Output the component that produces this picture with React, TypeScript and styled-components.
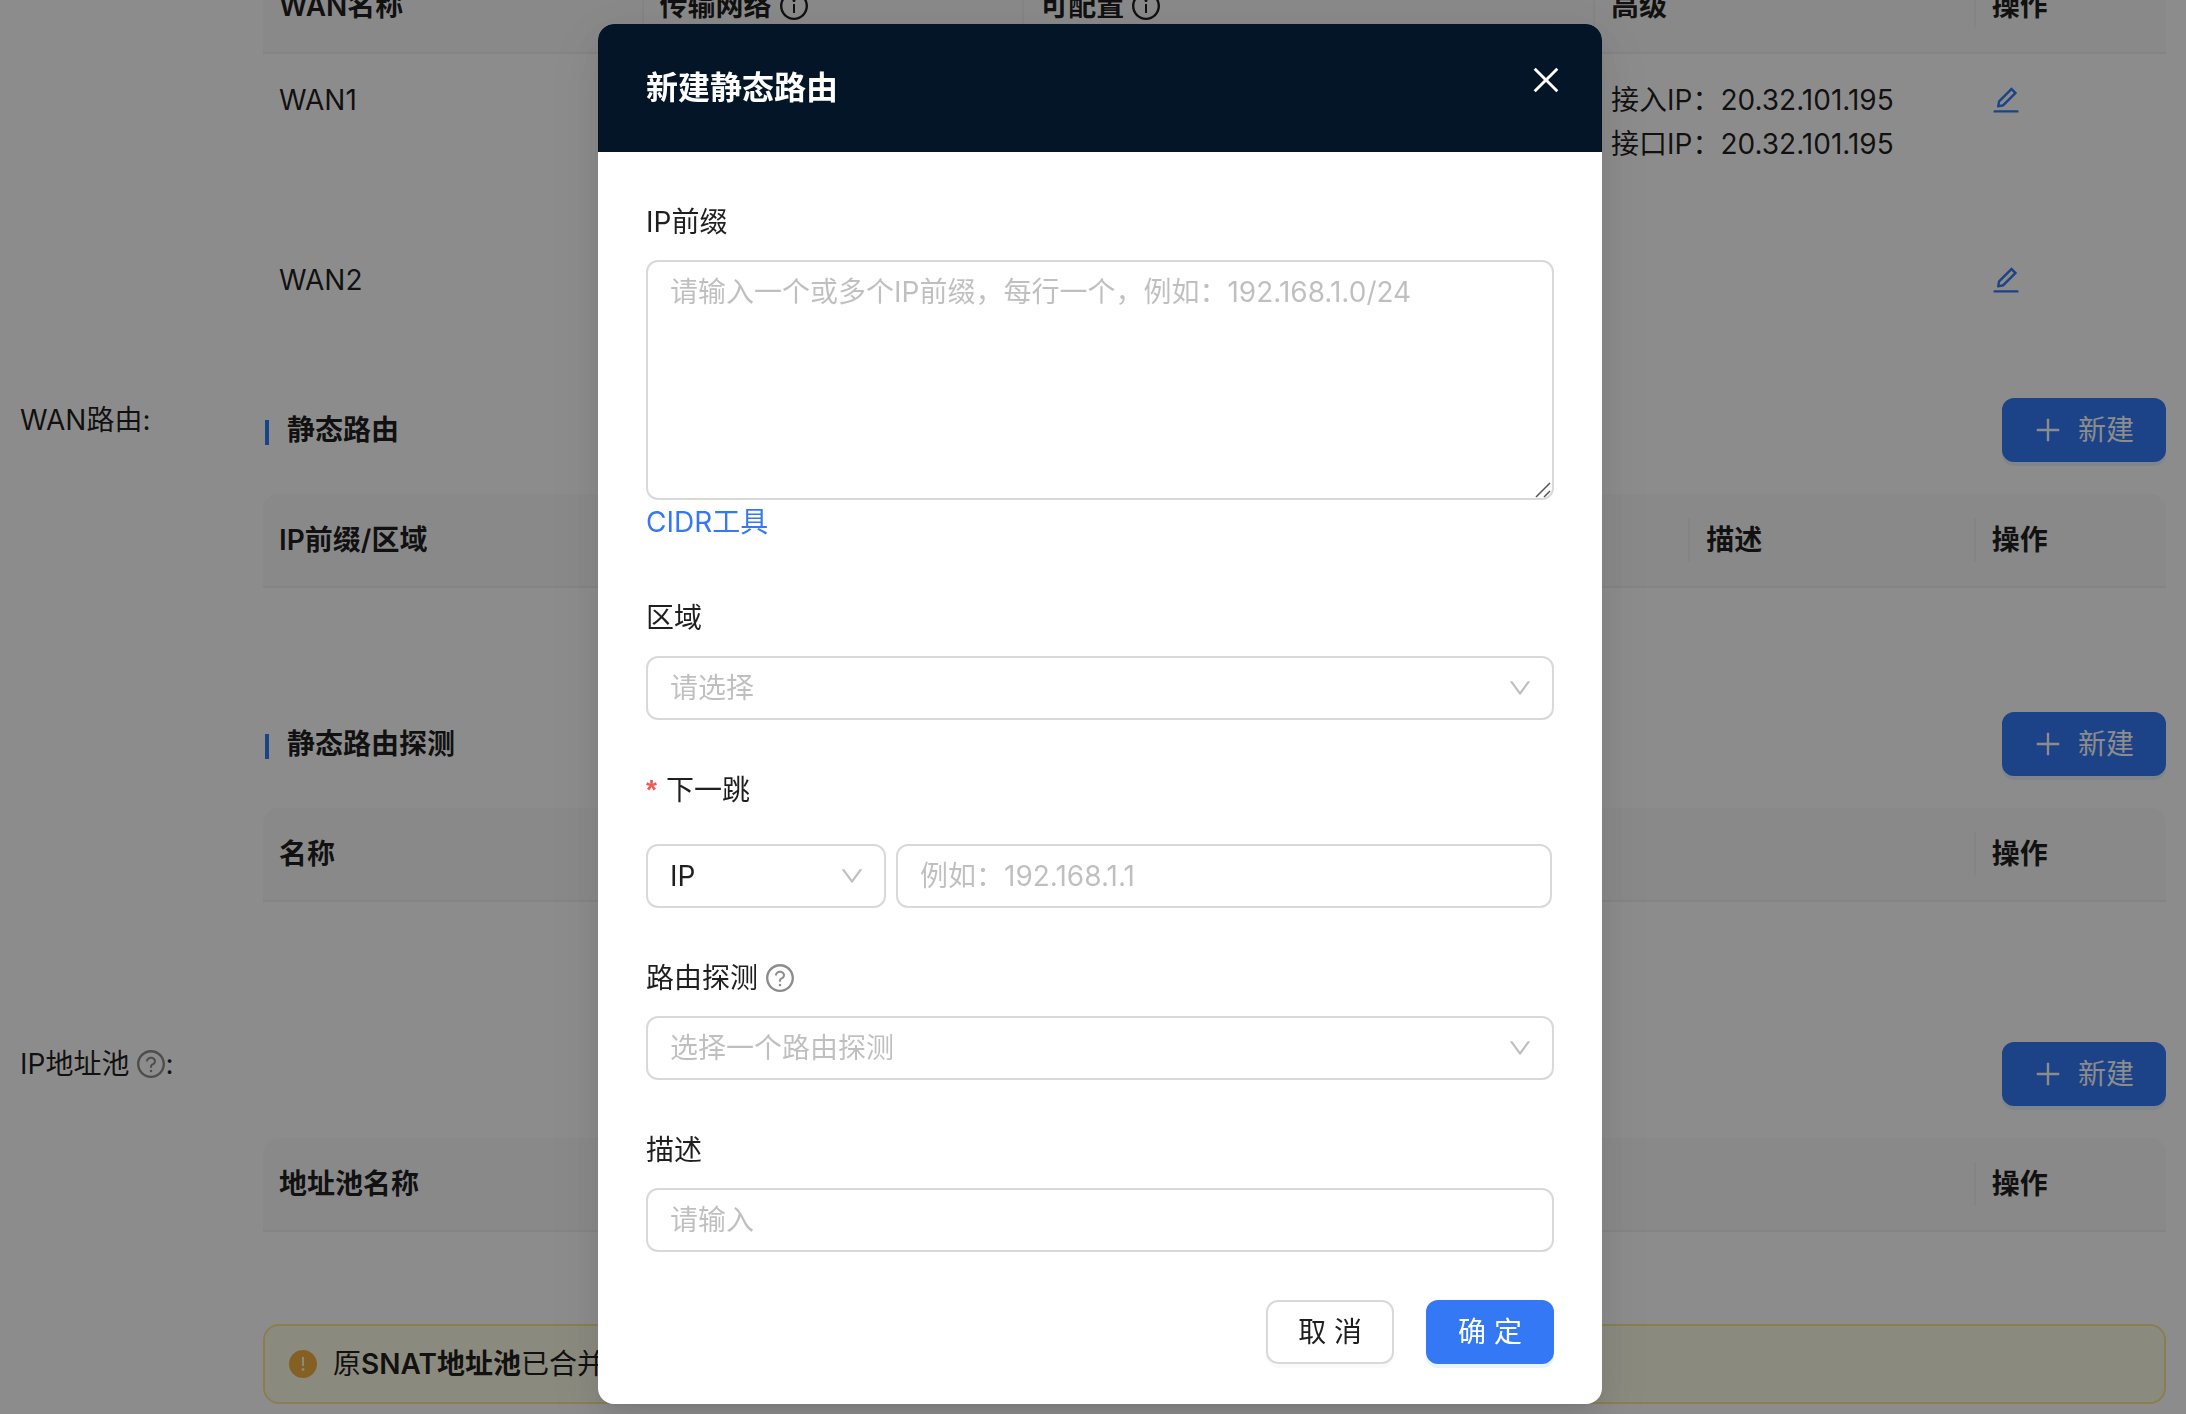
import React from "react";
import styled, { createGlobalStyle, css } from "styled-components";
import {
  AiFillExclamationCircle,
  AiOutlineClose,
  AiOutlineDown,
  AiOutlineEdit,
  AiOutlineInfoCircle,
  AiOutlinePlus,
  AiOutlineQuestionCircle,
} from "react-icons/ai";

const color = {
  primary: "#3478f6",
  text: "rgba(0, 0, 0, 0.88)",
  secondary: "rgba(0, 0, 0, 0.45)",
  placeholder: "rgba(0, 0, 0, 0.25)",
  border: "#d9d9d9",
  split: "#f0f0f0",
};

/* The glyphs are drawn inside a 64-unit margin; this crops it away. */
const tight = { viewBox: "64 64 896 896" };

const GlobalStyle = createGlobalStyle`
  *, *::before, *::after { box-sizing: border-box; }
  body {
    margin: 0;
    overflow: hidden;
    background: #fff;
    color: ${color.text};
    font-family: Inter, "Noto Sans CJK SC", sans-serif;
    font-size: 28px;
    line-height: 44px;
  }
  button, input, select, textarea {
    margin: 0;
    font: inherit;
    color: inherit;
  }
  svg { display: block; flex: none; }
`;

/* ---------- settings page behind the dialog ---------- */

const Page = styled.main`
  display: flex;
  flex-direction: column;
  gap: 48px;
  margin-top: -40px;
  padding: 0 20px;
`;

const Section = styled.section`
  display: grid;
  grid-template-columns: 243px minmax(0, 1fr);
`;

const SectionLabel = styled.div`
  display: flex;
  align-items: center;
  height: 44px;
  white-space: nowrap;
`;

const SectionBody = styled.div`
  display: flex;
  flex-direction: column;
  gap: 32px;
`;

const Stack = styled.div`
  display: flex;
  flex-direction: column;
`;

const HintIcon = styled(AiOutlineQuestionCircle)`
  margin-left: 8px;
  color: ${color.secondary};
`;

const Table = styled.table`
  width: 100%;
  table-layout: fixed;
  border-collapse: separate;
  border-spacing: 0;
`;

const Th = styled.th<{ $width: number }>`
  position: relative;
  width: ${(p) => p.$width}%;
  padding: 24px 16px;
  border-bottom: 2px solid ${color.split};
  background: #fafafa;
  font-weight: 600;
  text-align: left;
  &:first-child { border-top-left-radius: 16px; }
  &:last-child { border-top-right-radius: 16px; }
  &:not(:last-child)::after {
    content: "";
    position: absolute;
    top: 24px;
    right: 0;
    width: 2px;
    height: 44px;
    background: ${color.split};
  }
`;

const ThContent = styled.span`
  display: flex;
  align-items: center;
  gap: 8px;
`;

const Td = styled.td<{ $height: number }>`
  height: ${(p) => p.$height}px;
  padding: 24px 16px;
  vertical-align: top;
`;

const EditButton = styled.button`
  display: flex;
  align-items: center;
  height: 44px;
  padding: 0;
  border: 0;
  background: none;
  color: ${color.primary};
`;

const Toolbar = styled.div`
  display: flex;
  align-items: center;
  justify-content: space-between;
`;

const Heading = styled.h3`
  display: flex;
  align-items: center;
  gap: 18px;
  margin: 0;
  padding-left: 2px;
  font-size: 28px;
  font-weight: 600;
  &::before {
    content: "";
    width: 4px;
    height: 25px;
    margin-top: 4px;
    background: ${color.primary};
  }
`;

const Button = styled.button<{ $primary?: boolean }>`
  display: flex;
  align-items: center;
  gap: 16px;
  height: 64px;
  padding: 0 30px;
  border: 2px solid ${color.border};
  border-radius: 12px;
  background: #fff;
  box-shadow: 0 4px 0 rgba(0, 0, 0, 0.02);
  white-space: pre;
  ${(p) =>
    p.$primary &&
    css`
      border-color: ${color.primary};
      background: ${color.primary};
      box-shadow: 0 4px 0 rgba(5, 145, 255, 0.1);
      color: #fff;
    `}
`;

const CreateButton = styled(Button)`
  margin-left: auto;
`;

const Alert = styled.div`
  display: flex;
  align-items: center;
  gap: 16px;
  padding: 16px 24px;
  border: 2px solid #fbe594;
  border-radius: 16px;
  background: #fefbe8;
  svg { color: #f2b042; }
  strong { font-weight: 600; }
`;

/* ---------- dialog ---------- */

const Mask = styled.div`
  position: fixed;
  inset: 0;
  display: flex;
  align-items: flex-start;
  justify-content: center;
  padding: 24px 0 0 14px;
  background: rgba(0, 0, 0, 0.45);
`;

const Dialog = styled.div`
  position: relative;
  width: 1004px;
  max-width: 100%;
  border-radius: 16px;
  background: #fff;
  box-shadow: 0 12px 32px 0 rgba(0, 0, 0, 0.08), 0 6px 12px -8px rgba(0, 0, 0, 0.12),
    0 18px 56px 16px rgba(0, 0, 0, 0.05);
`;

const DialogHeader = styled.header`
  padding: 40px 48px;
  border-radius: 16px 16px 0 0;
  background: #031526;
`;

const DialogTitle = styled.h2`
  margin: 0;
  color: #fff;
  font-size: 32px;
  font-weight: 600;
  line-height: 48px;
`;

const CloseButton = styled.button`
  position: absolute;
  top: 34px;
  right: 34px;
  display: flex;
  align-items: center;
  justify-content: center;
  width: 44px;
  height: 44px;
  padding: 0;
  border: 0;
  background: none;
  color: #fff;
`;

const Form = styled.form`
  display: flex;
  flex-direction: column;
  gap: 48px;
  padding: 48px 48px 40px;
`;

const Field = styled.div<{ $gap?: number }>`
  display: flex;
  flex-direction: column;
  gap: ${(p) => p.$gap ?? 16}px;
`;

const Label = styled.label`
  display: flex;
  align-items: center;
  height: 44px;
`;

const Required = styled.span`
  width: 20px;
  color: #ed5b56;
  font-family: "Liberation Sans", sans-serif;
  font-weight: 700;
`;

const control = css`
  display: block;
  width: 100%;
  border: 2px solid ${color.border};
  border-radius: 12px;
  outline: 0;
  background: #fff;
  &::placeholder {
    color: ${color.placeholder};
    opacity: 1;
  }
`;

const Input = styled.input`
  ${control}
  height: 64px;
  padding: 0 22px;
`;

const AreaBox = styled.div`
  position: relative;
  padding-bottom: 4px;
`;

const TextArea = styled.textarea`
  ${control}
  height: 240px;
  padding: 8px 22px;
  resize: none;
`;

const Grip = styled.svg`
  position: absolute;
  top: 222px;
  right: 3px;
  pointer-events: none;
`;

const Link = styled.a`
  color: ${color.primary};
  text-decoration: none;
`;

const SelectBox = styled.div`
  position: relative;
`;

const NativeSelect = styled.select<{ $empty?: boolean }>`
  ${control}
  height: 64px;
  padding: 0 56px 0 22px;
  appearance: none;
  color: ${(p) => (p.$empty ? color.placeholder : color.text)};
`;

const Arrow = styled(AiOutlineDown)`
  position: absolute;
  top: 20px;
  right: 22px;
  color: ${color.placeholder};
  pointer-events: none;
`;

const HopRow = styled.div`
  display: grid;
  grid-template-columns: 240px minmax(0, 1fr);
  gap: 10px;
  padding-right: 2px;
`;

const Footer = styled.footer`
  display: flex;
  justify-content: flex-end;
  gap: 32px;
`;

type Column = { title: string; width: number; info?: boolean };

function HeadRow({ columns }: { columns: Column[] }) {
  return (
    <thead>
      <tr>
        {columns.map((c) => (
          <Th key={c.title} $width={c.width} scope="col">
            <ThContent>
              {c.title}
              {c.info && <AiOutlineInfoCircle size={28} {...tight} />}
            </ThContent>
          </Th>
        ))}
      </tr>
    </thead>
  );
}

function EmptyTable({ columns }: { columns: Column[] }) {
  return (
    <Table>
      <HeadRow columns={columns} />
      <tbody>
        <tr>
          <Td $height={92} colSpan={columns.length} />
        </tr>
      </tbody>
    </Table>
  );
}

function Create() {
  return (
    <CreateButton type="button" $primary>
      <AiOutlinePlus size={28} {...tight} />
      新建
    </CreateButton>
  );
}

function Select({ id, value, empty }: { id: string; value: string; empty?: boolean }) {
  return (
    <SelectBox>
      <NativeSelect id={id} $empty={empty} defaultValue={value}>
        <option value={value}>{value}</option>
      </NativeSelect>
      <Arrow size={24} {...tight} />
    </SelectBox>
  );
}

const wanColumns: Column[] = [
  { title: "WAN名称", width: 20 },
  { title: "传输网络", width: 20, info: true },
  { title: "可配置", width: 30, info: true },
  { title: "高级", width: 20 },
  { title: "操作", width: 10 },
];

const wanRows = [
  { name: "WAN1", height: 180, advanced: ["接入IP：20.32.101.195", "接口IP：20.32.101.195"] },
  { name: "WAN2", height: 116, advanced: [] },
];

export default function App() {
  return (
    <>
      <GlobalStyle />
      <Page>
        <Section>
          <SectionLabel />
          <Table>
            <HeadRow columns={wanColumns} />
            <tbody>
              {wanRows.map((row) => (
                <tr key={row.name}>
                  <Td $height={row.height}>{row.name}</Td>
                  <Td $height={row.height} />
                  <Td $height={row.height} />
                  <Td $height={row.height}>
                    {row.advanced.map((line) => (
                      <div key={line}>{line}</div>
                    ))}
                  </Td>
                  <Td $height={row.height}>
                    <EditButton type="button" aria-label="编辑">
                      <AiOutlineEdit size={28} {...tight} />
                    </EditButton>
                  </Td>
                </tr>
              ))}
            </tbody>
          </Table>
        </Section>

        <Section>
          <SectionLabel>WAN路由:</SectionLabel>
          <SectionBody>
            <Toolbar>
              <Heading>静态路由</Heading>
              <Create />
            </Toolbar>
            <EmptyTable
              columns={[
                { title: "IP前缀/区域", width: 75 },
                { title: "描述", width: 15 },
                { title: "操作", width: 10 },
              ]}
            />
            <Toolbar>
              <Heading>静态路由探测</Heading>
              <Create />
            </Toolbar>
            <EmptyTable
              columns={[
                { title: "名称", width: 90 },
                { title: "操作", width: 10 },
              ]}
            />
          </SectionBody>
        </Section>

        <Section>
          <SectionLabel>
            IP地址池
            <HintIcon size={28} {...tight} />:
          </SectionLabel>
          <SectionBody>
            <Toolbar>
              <Create />
            </Toolbar>
            <Stack>
              <EmptyTable
                columns={[
                  { title: "地址池名称", width: 90 },
                  { title: "操作", width: 10 },
                ]}
              />
              <Alert>
                <AiFillExclamationCircle size={28} {...tight} />
                <span>
                  原<strong>SNAT地址池</strong>已合并
                </span>
              </Alert>
            </Stack>
          </SectionBody>
        </Section>
      </Page>

      <Mask>
        <Dialog role="dialog" aria-modal="true" aria-labelledby="dialog-title">
          <DialogHeader>
            <DialogTitle id="dialog-title">新建静态路由</DialogTitle>
          </DialogHeader>
          <CloseButton type="button" aria-label="关闭">
            <AiOutlineClose size={32} {...tight} />
          </CloseButton>
          <Form onSubmit={(e) => e.preventDefault()}>
            <Field>
              <Label htmlFor="prefix">IP前缀</Label>
              <AreaBox>
                <TextArea
                  id="prefix"
                  placeholder="请输入一个或多个IP前缀，每行一个，例如：192.168.1.0/24"
                />
                <Grip width="16" height="16" viewBox="0 0 16 16" stroke="#555" strokeWidth="1.5">
                  <path d="M1 15 15 1M9 15l6-6" />
                </Grip>
                <Link href="#cidr">CIDR工具</Link>
              </AreaBox>
            </Field>
            <Field>
              <Label htmlFor="region">区域</Label>
              <Select id="region" value="请选择" empty />
            </Field>
            <Field $gap={32}>
              <Label htmlFor="next-hop">
                <Required>*</Required>下一跳
              </Label>
              <HopRow>
                <Select id="next-hop" value="IP" />
                <Input aria-label="下一跳地址" placeholder="例如：192.168.1.1" />
              </HopRow>
            </Field>
            <Field>
              <Label htmlFor="probe">
                路由探测
                <HintIcon size={28} {...tight} />
              </Label>
              <Select id="probe" value="选择一个路由探测" empty />
            </Field>
            <Field>
              <Label htmlFor="description">描述</Label>
              <Input id="description" placeholder="请输入" />
            </Field>
            <Footer>
              <Button type="button">取 消</Button>
              <Button type="submit" $primary>
                确 定
              </Button>
            </Footer>
          </Form>
        </Dialog>
      </Mask>
    </>
  );
}
